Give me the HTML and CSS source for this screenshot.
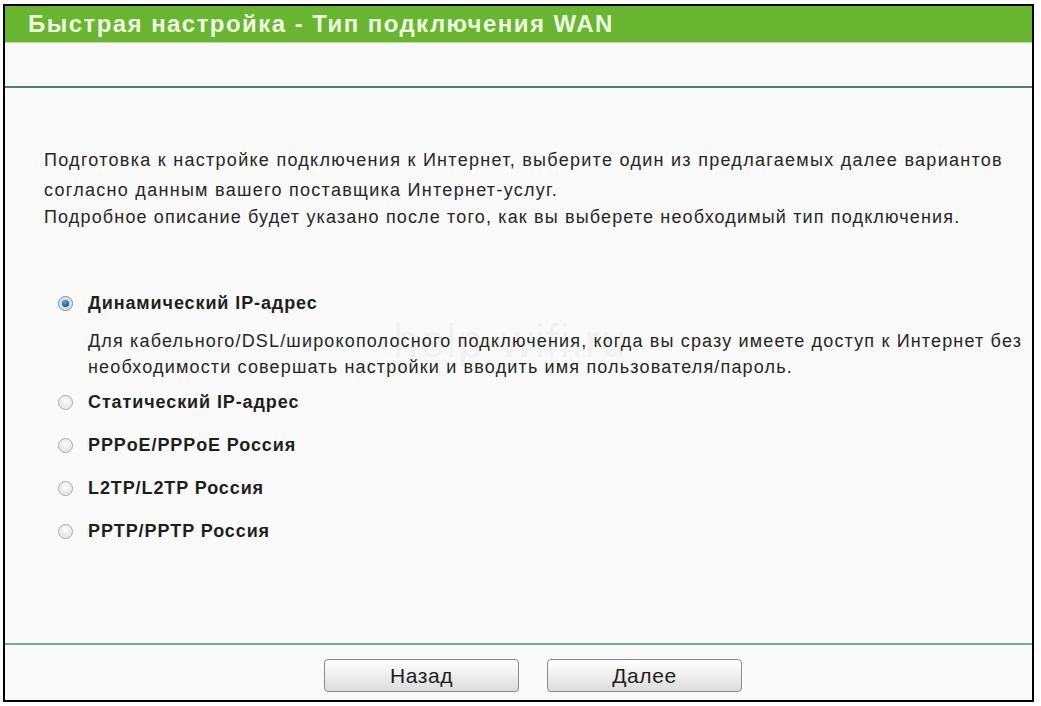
FILE: index.html
```html
<!DOCTYPE html>
<html lang="ru">
<head>
<meta charset="utf-8">
<title>Быстрая настройка - Тип подключения WAN</title>
<link rel="stylesheet" href="styles.css">
</head>
<body>
<div class="frame">
  <div class="title">Быстрая настройка - Тип подключения WAN</div>
  <div class="subbar"></div>
  <div class="content">
    <p class="intro">Подготовка к настройке подключения к Интернет, выберите один из предлагаемых далее вариантов<br>согласно данным вашего поставщика Интернет-услуг.</p>
    <p class="intro2">Подробное описание будет указано после того, как вы выберете необходимый тип подключения.</p>
    <div class="options">
      <div class="opt"><span class="radio checked"></span><span class="label">Динамический IP-адрес</span></div>
      <div class="desc">Для кабельного/DSL/широкополосного подключения, когда вы сразу имеете доступ к Интернет без<br>необходимости совершать настройки и вводить имя пользователя/пароль.</div>
      <div class="opt"><span class="radio"></span><span class="label">Статический IP-адрес</span></div>
      <div class="opt"><span class="radio"></span><span class="label">PPPoE/PPPoE Россия</span></div>
      <div class="opt"><span class="radio"></span><span class="label">L2TP/L2TP Россия</span></div>
      <div class="opt"><span class="radio"></span><span class="label">PPTP/PPTP Россия</span></div>
    </div>
    <div class="watermark">help-wifi.ru</div>
  </div>
  <div class="footer">
    <button class="btn">Назад</button>
    <button class="btn">Далее</button>
  </div>
</div>
</body>
</html>
```

FILE: styles.css
```css
html, body {
  margin: 0;
  padding: 0;
  background: #ffffff;
}
body {
  padding: 4px 0 0 3px;
  font-family: "Liberation Sans", Arial, sans-serif;
}
.frame {
  width: 1027px;
  height: 694px;
  border: 2px solid #000;
  background: #fafafa;
  display: flex;
  flex-direction: column;
}
.title {
  height: 36px;
  line-height: 36px;
  background: #68b530;
  color: #effae2;
  font-weight: bold;
  font-size: 24px;
  letter-spacing: 1.45px;
  padding-left: 23px;
  white-space: nowrap;
}
.subbar {
  height: 43px;
  background: #f8f9f8;
  border-top: 1px solid #b9e09f;
  border-bottom: 2px solid #52806f;
}
.content {
  flex: 1;
  position: relative;
  padding: 57px 0 0 39px;
  color: #262626;
  font-size: 18px;
  letter-spacing: 1.2px;
}
.intro {
  margin: 0;
  line-height: 30px;
  white-space: nowrap;
  letter-spacing: 1.28px;
}
.intro2 {
  margin: 0;
  line-height: 24px;
  white-space: nowrap;
  letter-spacing: 1.15px;
}
.options {
  margin-top: 53px;
}
.opt {
  height: 43px;
  display: flex;
  align-items: center;
  padding-left: 14px;
}
.opt:first-child {
  height: 42px;
}
.desc {
  margin: 4px 0 1px 44px;
  line-height: 26px;
  white-space: nowrap;
  letter-spacing: 1.16px;
}
.radio {
  width: 13px;
  height: 13px;
  border-radius: 50%;
  border: 1px solid #a9a9a9;
  background: radial-gradient(circle at 50% 40%, #ffffff 0%, #e6e6e6 60%, #cfcfcf 100%);
  box-shadow: inset 0 0 0 1px #f2f2f2;
  position: relative;
  flex: none;
}
.radio.checked {
  border-color: #6f8aa3;
  background: radial-gradient(circle, #dce8f2 0%, #bcd0e2 100%);
}
.radio.checked::after {
  content: "";
  position: absolute;
  left: 3px;
  top: 3px;
  width: 7px;
  height: 7px;
  border-radius: 50%;
  background: radial-gradient(circle at 40% 35%, #5aa7e0 0%, #1f6aa8 55%, #133f66 100%);
}
.label {
  margin-left: 15px;
  font-weight: bold;
  letter-spacing: 0.9px;
  color: #1e1e1e;
}
.watermark {
  position: absolute;
  left: 388px;
  top: 226px;
  font-size: 46px;
  letter-spacing: 1px;
  color: rgba(0, 0, 0, 0.05);
  pointer-events: none;
  white-space: nowrap;
}
.footer {
  height: 57px;
  border-top: 2px solid #6fae98;
  display: flex;
  align-items: flex-start;
  padding: 14px 0 0 319px;
  gap: 28px;
  box-sizing: border-box;
}
.btn {
  width: 195px;
  height: 33px;
  border: 1px solid #8a8a8a;
  border-radius: 4px;
  background: linear-gradient(#ffffff 0%, #f0f0f0 45%, #dcdcdc 100%);
  font-family: "Liberation Sans", Arial, sans-serif;
  font-size: 21px;
  letter-spacing: 0.6px;
  color: #1e1e1e;
  padding: 0;
}
```
